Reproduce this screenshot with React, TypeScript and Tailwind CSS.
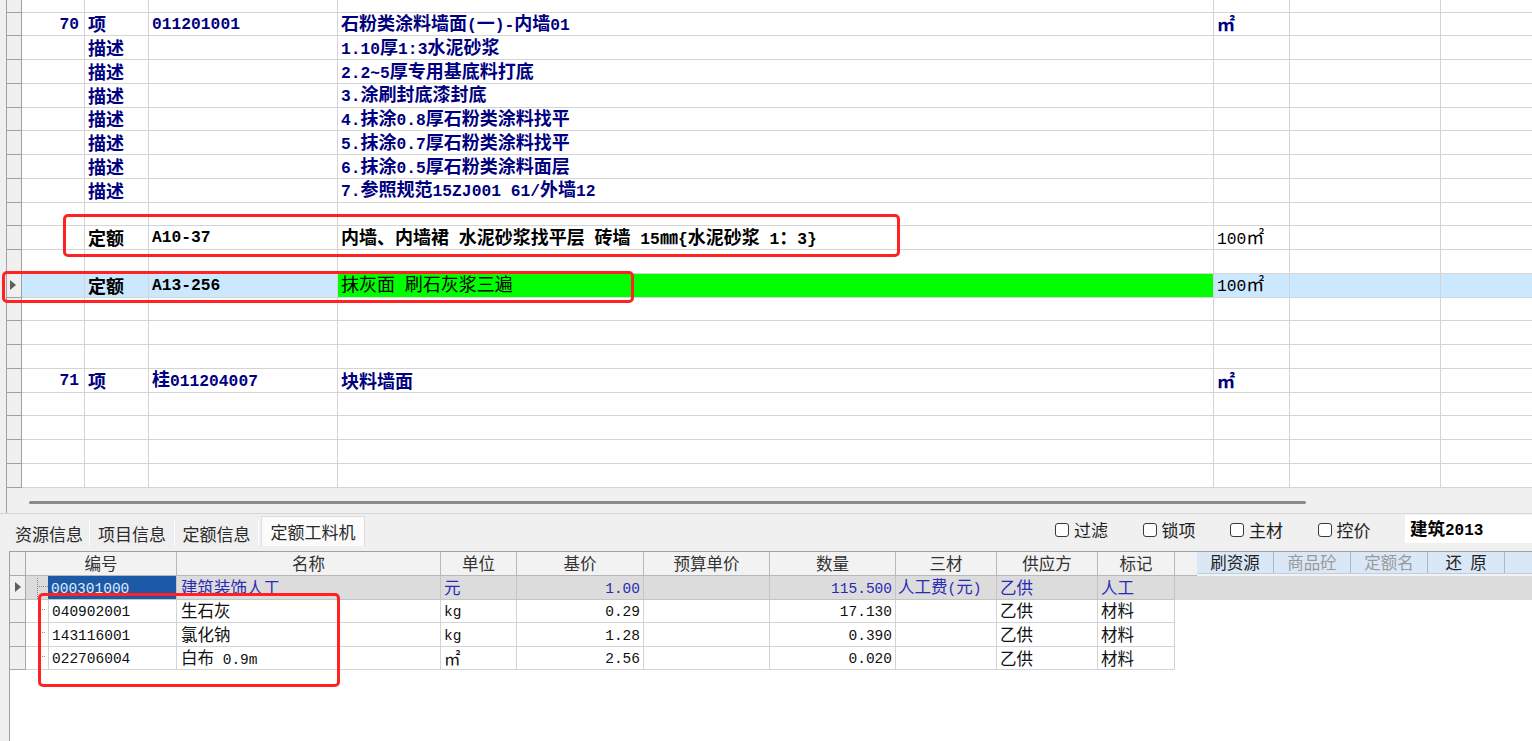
import React from 'react';

const TOP_CJK = "font-['Noto_Sans_CJK_SC',sans-serif] text-[18px]";
const TOP_ASC = "font-['Liberation_Mono','Noto_Sans_CJK_SC',monospace] text-[16.3px]";
const BOT_CJK = "font-['Noto_Sans_CJK_SC',sans-serif] text-[16.5px]";
const BOT_ASC = "font-['Liberation_Mono','Noto_Sans_CJK_SC',monospace] text-[14.5px]";

function Mixed({ text, cjk, asc }: { text: string; cjk: string; asc: string }) {
  const parts = text.split(/([\x00-\x7f]+)/).filter((p) => p.length > 0);
  return (
    <span className="whitespace-pre leading-none">
      {parts.map((p, i) =>
        /^[\x00-\x7f]+$/.test(p) ? (
          <span key={i} className={asc}>
            {p}
          </span>
        ) : (
          <span key={i} className={cjk}>
            {p}
          </span>
        )
      )}
    </span>
  );
}

function Tri({ cls }: { cls?: string }) {
  return (
    <svg width="6" height="10" viewBox="0 0 6 10" className={cls}>
      <polygon points="0,0 6,5 0,10" fill="#5f5f5f" />
    </svg>
  );
}

type TopRow = {
  num?: string;
  type?: string;
  code?: string;
  name?: string;
  unit?: string;
  tone?: 'navy' | 'black';
  sel?: boolean;
};

const topRows: TopRow[] = [
  { num: '70', type: '项', code: '011201001', name: '石粉类涂料墙面(一)-内墙01', unit: '㎡', tone: 'navy' },
  { type: '描述', name: '1.10厚1:3水泥砂浆', tone: 'navy' },
  { type: '描述', name: '2.2~5厚专用基底料打底', tone: 'navy' },
  { type: '描述', name: '3.涂刷封底漆封底', tone: 'navy' },
  { type: '描述', name: '4.抹涂0.8厚石粉类涂料找平', tone: 'navy' },
  { type: '描述', name: '5.抹涂0.7厚石粉类涂料找平', tone: 'navy' },
  { type: '描述', name: '6.抹涂0.5厚石粉类涂料面层', tone: 'navy' },
  { type: '描述', name: '7.参照规范15ZJ001 61/外墙12', tone: 'navy' },
  {},
  { type: '定额', code: 'A10-37', name: '内墙、内墙裙 水泥砂浆找平层 砖墙 15㎜{水泥砂浆 1：3}', unit: '100㎡', tone: 'black' },
  {},
  { type: '定额', code: 'A13-256', name: '抹灰面 刷石灰浆三遍', unit: '100㎡', tone: 'black', sel: true },
  {},
  {},
  {},
  { num: '71', type: '项', code: '桂011204007', name: '块料墙面', unit: '㎡', tone: 'navy' },
  {},
  {},
  {},
  {},
];

function TopGridRow({ r, partial }: { r: TopRow; partial?: boolean }) {
  const color = r.tone === 'black' ? 'text-black' : 'text-[#000080]';
  const bg = r.sel ? 'bg-[#cce8ff]' : 'bg-white';
  const h = partial ? 'h-[12.5px]' : 'h-[23.75px]';
  const cell = 'shrink-0 border-r border-b border-[#d4d4d4] flex items-center';
  return (
    <div className={`flex ${h} ${bg}`}>
      <div className="w-[15px] shrink-0 border-r border-b border-[#a0a0a0] bg-[#f0f0f0] flex items-center pl-[3px]">
        {r.sel && <Tri />}
      </div>
      <div className={`${cell} w-[63px] justify-end pr-[5px] font-bold ${color}`}>
        {r.num && <Mixed text={r.num} cjk={TOP_CJK} asc={TOP_ASC} />}
      </div>
      <div className={`${cell} w-[64px] pl-[3px] font-bold ${color}`}>
        {r.type && <Mixed text={r.type} cjk={TOP_CJK} asc={TOP_ASC} />}
      </div>
      <div className={`${cell} w-[189px] pl-[3px] font-bold ${color}`}>
        {r.code && <Mixed text={r.code} cjk={TOP_CJK} asc={TOP_ASC} />}
      </div>
      <div className={`${cell} w-[876px] pl-[3px] ${r.sel ? 'bg-[#00ff00] font-normal' : 'font-bold'} ${color}`}>
        {r.name && <Mixed text={r.name} cjk={TOP_CJK} asc={TOP_ASC} />}
      </div>
      <div className={`${cell} w-[76px] pl-[3px] ${r.tone === 'black' ? 'font-normal' : 'font-bold'} ${color}`}>
        {r.unit && <Mixed text={r.unit} cjk={TOP_CJK} asc={TOP_ASC} />}
      </div>
      <div className={`${cell} w-[151px]`} />
      <div className="flex-1 border-b border-[#d4d4d4]" />
    </div>
  );
}

type BotRow = {
  code: string;
  name: string;
  unit: string;
  price: string;
  qty: string;
  sancai: string;
  supplier: string;
  mark: string;
  sel?: boolean;
};

const botRows: BotRow[] = [
  { code: '000301000', name: '建筑装饰人工', unit: '元', price: '1.00', qty: '115.500', sancai: '人工费(元)', supplier: '乙供', mark: '人工', sel: true },
  { code: '040902001', name: '生石灰', unit: 'kg', price: '0.29', qty: '17.130', sancai: '', supplier: '乙供', mark: '材料' },
  { code: '143116001', name: '氯化钠', unit: 'kg', price: '1.28', qty: '0.390', sancai: '', supplier: '乙供', mark: '材料' },
  { code: '022706004', name: '白布 0.9m', unit: '㎡', price: '2.56', qty: '0.020', sancai: '', supplier: '乙供', mark: '材料' },
];

const headers: { label: string; w: string }[] = [
  { label: '编号', w: 'w-[151px]' },
  { label: '名称', w: 'w-[264px]' },
  { label: '单位', w: 'w-[76px]' },
  { label: '基价', w: 'w-[127px]' },
  { label: '预算单价', w: 'w-[126px]' },
  { label: '数量', w: 'w-[126px]' },
  { label: '三材', w: 'w-[101px]' },
  { label: '供应方', w: 'w-[101px]' },
  { label: '标记', w: 'w-[77px]' },
];

function BotGridRow({ r }: { r: BotRow }) {
  const color = r.sel ? 'text-[#2a2ab4]' : 'text-[#111]';
  const line = r.sel ? 'border-[#c4c4c4]' : 'border-[#d4d4d4]';
  const cell = `shrink-0 border-r border-b ${line} flex items-center ${color}`;
  return (
    <div className={`flex h-[23.6px] ${r.sel ? 'bg-[#dcdcdc]' : 'bg-white'}`}>
      <div className="w-[16px] shrink-0 border-r border-b border-[#a8a8a8] bg-[#f0f0f0] flex items-center pl-[5px]">
        {r.sel && <Tri />}
      </div>
      <div className={`shrink-0 w-[151px] border-r border-b ${line} flex`}>
        <div className="w-[22px] shrink-0 relative">
          {r.sel ? (
            <>
              <div className="absolute left-[11px] top-[2px] bottom-0 border-l border-dotted border-[#8a8a8a]" />
              <div className="absolute left-[11px] top-[10px] w-[11px] border-t border-dotted border-[#8a8a8a]" />
            </>
          ) : (
            <div className="absolute left-[16px] top-[9px] w-[3px] border-t border-dotted border-[#8a8a8a]" />
          )}
        </div>
        <div
          className={`flex-1 flex items-center pl-[3px] ${
            r.sel ? 'bg-[#1c5aa7] text-[#dfe8fb]' : 'border-l border-[#d4d4d4] text-[#111]'
          }`}
        >
          <Mixed text={r.code} cjk={BOT_CJK} asc={BOT_ASC} />
        </div>
      </div>
      <div className={`${cell} w-[264px] pl-[4px]`}>
        <Mixed text={r.name} cjk={BOT_CJK} asc={BOT_ASC} />
      </div>
      <div className={`${cell} w-[76px] pl-[3px]`}>
        <Mixed text={r.unit} cjk={BOT_CJK} asc={BOT_ASC} />
      </div>
      <div className={`${cell} w-[127px] justify-end pr-[3px]`}>
        <Mixed text={r.price} cjk={BOT_CJK} asc={BOT_ASC} />
      </div>
      <div className={`${cell} w-[126px]`} />
      <div className={`${cell} w-[126px] justify-end pr-[3px]`}>
        <Mixed text={r.qty} cjk={BOT_CJK} asc={BOT_ASC} />
      </div>
      <div className={`${cell} w-[101px] pl-[2px]`}>
        {r.sancai && <Mixed text={r.sancai} cjk={BOT_CJK} asc={BOT_ASC} />}
      </div>
      <div className={`${cell} w-[101px] pl-[3px]`}>
        <Mixed text={r.supplier} cjk={BOT_CJK} asc={BOT_ASC} />
      </div>
      <div className={`${cell} w-[77px] pl-[3px]`}>
        <Mixed text={r.mark} cjk={BOT_CJK} asc={BOT_ASC} />
      </div>
      <div className="flex-1" />
    </div>
  );
}

function Check({ label }: { label: string }) {
  return (
    <div className="w-[87.5px] shrink-0 flex items-center">
      <div className="w-[14px] h-[14px] border border-[#3a3a3a] rounded-[3px] bg-white shrink-0" />
      <span className="ml-[5px] font-['Noto_Sans_CJK_SC',sans-serif] text-[17px] leading-none text-[#1e1e1e]">{label}</span>
    </div>
  );
}

export default function App() {
  return (
    <div className="w-[1532px] h-[741px] overflow-hidden relative bg-[#f0f0f0] flex flex-col">
      {/* top panel */}
      <div className="h-[514px] shrink-0 border-b border-[#d6d6d6] pl-[6px] flex flex-col">
        <div className="flex-1 border-l border-[#a0a0a0] flex flex-col">
          <div className="shrink-0 flex flex-col">
            <TopGridRow r={{}} partial />
            {topRows.map((r, i) => (
              <TopGridRow key={i} r={r} />
            ))}
          </div>
          <div className="flex-1 relative">
            <div className="absolute left-[22px] top-[13px] w-[1277px] h-[3px] rounded-full bg-[#8a8a8a]" />
          </div>
        </div>
      </div>

      {/* tab strip */}
      <div className="h-[37px] shrink-0 flex">
        <div className="flex items-end pl-[9px] pb-[5px]">
          {['资源信息', '项目信息', '定额信息'].map((t, i) => (
            <div
              key={t}
              className={`h-[26px] flex items-center justify-center border-r border-white bg-[#efefef] font-['Noto_Sans_CJK_SC',sans-serif] text-[17px] leading-none text-[#2a2a2a] ${
                i === 0 ? 'w-[81px]' : i === 1 ? 'w-[85px]' : 'w-[84px]'
              }`}
            >
              {t}
            </div>
          ))}
          <div className="ml-[2px] w-[104px] h-[30px] flex items-center justify-center bg-[#fbfbfb] border border-b-0 border-[#dcdcdc] font-['Noto_Sans_CJK_SC',sans-serif] text-[17px] leading-none text-[#2a2a2a]">
            定额工料机
          </div>
        </div>
        <div className="flex-1" />
        <div className="flex items-start">
          <div className="flex items-center mt-[7px]">
            <Check label="过滤" />
            <Check label="锁项" />
            <Check label="主材" />
            <Check label="控价" />
          </div>
          <div className="w-[127px] h-[28px] mt-[1px] bg-white flex items-center pl-[5px] font-bold text-black">
            <Mixed
              text="建筑2013"
              cjk="font-['Noto_Sans_CJK_SC',sans-serif] text-[17.5px]"
              asc="font-['Liberation_Mono','Noto_Sans_CJK_SC',monospace] text-[16px]"
            />
          </div>
        </div>
      </div>

      {/* bottom grid */}
      <div className="flex-1 ml-[9px] border-l border-t border-[#a0a0a0] bg-white flex flex-col">
        <div className="flex h-[24px] shrink-0">
          <div className="w-[16px] shrink-0 border-r border-b border-[#a8a8a8] bg-[#f0f0f0]" />
          {headers.map((h) => (
            <div
              key={h.label}
              className={`${h.w} shrink-0 border-r border-b border-[#b8b8b8] bg-[#f2f2f2] flex items-center justify-center font-['Noto_Sans_CJK_SC',sans-serif] text-[16.5px] leading-none text-[#333]`}
            >
              {h.label}
            </div>
          ))}
          <div className="w-[22px] shrink-0 border-b border-[#b8b8b8] bg-[#f2f2f2]" />
          <div className="flex-1 flex items-start bg-[#f2f2f2]">
            <div className="flex-1 h-[22px] flex bg-[#d9e7f7] border-b border-[#c0cfe0]">
              {[
                { t: '刷资源', c: 'text-[#222]' },
                { t: '商品砼', c: 'text-[#9a9a9a]' },
                { t: '定额名', c: 'text-[#9a9a9a]' },
                { t: '还\u2002原', c: 'text-[#222]' },
              ].map((b) => (
                <div
                  key={b.t}
                  className={`w-[77px] shrink-0 border-r border-[#a9b9cc] flex items-center justify-center whitespace-pre font-['Noto_Sans_CJK_SC',sans-serif] text-[16.5px] leading-none ${b.c}`}
                >
                  {b.t}
                </div>
              ))}
              <div className="flex-1" />
            </div>
          </div>
        </div>
        {botRows.map((r, i) => (
          <BotGridRow key={i} r={r} />
        ))}
        <div className="flex-1" />
      </div>

      {/* annotation boxes */}
      <div className="absolute left-[63px] top-[214px] w-[837px] h-[43px] border-[3px] border-[#ff2222] rounded-[5px] pointer-events-none" />
      <div className="absolute left-[2px] top-[271px] w-[632px] h-[32px] border-[3px] border-[#ff2222] rounded-[5px] pointer-events-none" />
      <div className="absolute left-[38px] top-[593px] w-[302px] h-[94px] border-[3px] border-[#ff2222] rounded-[5px] pointer-events-none" />
    </div>
  );
}
